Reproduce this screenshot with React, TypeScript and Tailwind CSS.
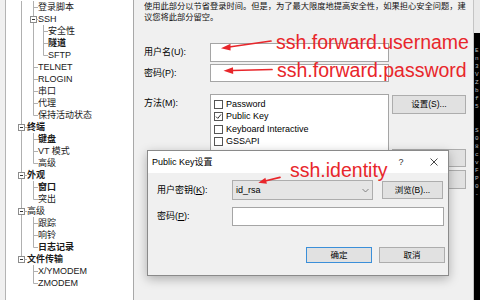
import React from 'react';

type Row = {
  t: string;
  lvl: 0 | 1 | 2;
  box?: boolean;
  bold?: boolean;
  last?: boolean;
  root: 'full' | 'half' | 'none';
};

const rows: Row[] = [
  { t: '登录脚本', lvl: 1, root: 'full' },
  { t: 'SSH', lvl: 1, box: true, root: 'full' },
  { t: '安全性', lvl: 2, root: 'full' },
  { t: '隧道', lvl: 2, bold: true, root: 'full' },
  { t: 'SFTP', lvl: 2, last: true, root: 'full' },
  { t: 'TELNET', lvl: 1, root: 'full' },
  { t: 'RLOGIN', lvl: 1, root: 'full' },
  { t: '串口', lvl: 1, root: 'full' },
  { t: '代理', lvl: 1, root: 'full' },
  { t: '保持活动状态', lvl: 1, last: true, root: 'full' },
  { t: '终端', lvl: 0, box: true, bold: true, root: 'full' },
  { t: '键盘', lvl: 1, bold: true, root: 'full' },
  { t: 'VT 模式', lvl: 1, root: 'full' },
  { t: '高级', lvl: 1, last: true, root: 'full' },
  { t: '外观', lvl: 0, box: true, bold: true, root: 'full' },
  { t: '窗口', lvl: 1, bold: true, root: 'full' },
  { t: '突出', lvl: 1, last: true, root: 'full' },
  { t: '高级', lvl: 0, box: true, root: 'full' },
  { t: '跟踪', lvl: 1, root: 'full' },
  { t: '响铃', lvl: 1, root: 'full' },
  { t: '日志记录', lvl: 1, bold: true, last: true, root: 'full' },
  { t: '文件传输', lvl: 0, box: true, bold: true, root: 'half' },
  { t: 'X/YMODEM', lvl: 1, root: 'none' },
  { t: 'ZMODEM', lvl: 1, last: true, root: 'none' },
];

const LC = '#b0b0b0';

function Guides({ r }: { r: Row }) {
  const w = r.lvl === 0 ? 21 : r.lvl === 1 ? 32 : 42;
  const els: React.ReactNode[] = [];
  const cy = 6.5;
  if (r.lvl === 0 && r.box) {
    els.push(<line key="rt" x1={15.5} y1={0} x2={15.5} y2={3.5} stroke={LC} />);
    if (r.root === 'full') els.push(<line key="rb" x1={15.5} y1={9.5} x2={15.5} y2={12} stroke={LC} />);
    els.push(<rect key="bx" x={12.5} y={3.5} width={6} height={6} fill="#fff" stroke="#8c8c8c" />);
    els.push(<line key="bm" x1={14} y1={cy} x2={17} y2={cy} stroke="#333" />);
    els.push(<line key="bh" x1={18.5} y1={cy} x2={21} y2={cy} stroke={LC} />);
  } else if (r.root === 'full') {
    els.push(<line key="r" x1={15.5} y1={0} x2={15.5} y2={12} stroke={LC} />);
  }
  if (r.lvl === 1) {
    if (r.box) {
      els.push(<line key="l1t" x1={27.5} y1={0} x2={27.5} y2={3.5} stroke={LC} />);
      els.push(<line key="l1b" x1={27.5} y1={9.5} x2={27.5} y2={12} stroke={LC} />);
      els.push(<rect key="bx1" x={24.5} y={3.5} width={6} height={6} fill="#fff" stroke="#8c8c8c" />);
      els.push(<line key="bm1" x1={26} y1={cy} x2={29} y2={cy} stroke="#333" />);
      els.push(<line key="bh1" x1={30.5} y1={cy} x2={32} y2={cy} stroke={LC} />);
    } else {
      els.push(<line key="l1" x1={27.5} y1={0} x2={27.5} y2={r.last ? cy : 12} stroke={LC} />);
      els.push(<line key="h1" x1={27.5} y1={cy} x2={32} y2={cy} stroke={LC} />);
    }
  }
  if (r.lvl === 2) {
    els.push(<line key="l1f" x1={27.5} y1={0} x2={27.5} y2={12} stroke={LC} />);
    els.push(<line key="l2" x1={37.5} y1={0} x2={37.5} y2={r.last ? cy : 12} stroke={LC} />);
    els.push(<line key="h2" x1={37.5} y1={cy} x2={42} y2={cy} stroke={LC} />);
  }
  return (
    <svg width={w} height={12} className="shrink-0 block">
      {els}
    </svg>
  );
}

function WinButton({ children, className = '' }: { children?: React.ReactNode; className?: string }) {
  return (
    <div
      className={`flex items-center justify-center bg-[#e1e1e1] border border-[#adadad] text-[8.5px] leading-none text-black ${className}`}
    >
      {children}
    </div>
  );
}

function CheckItem({ label, checked }: { label: string; checked?: boolean }) {
  return (
    <div className="flex items-center h-[12.5px] pl-[3px]">
      <div className="w-[9px] h-[9px] border border-[#555] bg-white flex items-center justify-center shrink-0">
        {checked && (
          <svg width="7" height="7" viewBox="0 0 7 7">
            <path d="M1 3.6 L2.8 5.4 L6 1.4" fill="none" stroke="#333" strokeWidth="1" />
          </svg>
        )}
      </div>
      <span className="ml-[3px] text-[9px] leading-none">{label}</span>
    </div>
  );
}

const term = ['E', 'n', '3', 'V', 'Z', 'b', 'f', '5', '', '', 'S', '0', '8', 'c', 'v', 'F', 'P', '0', '-'];

export default function App() {
  return (
    <div className="relative w-[480px] h-[300px] overflow-hidden bg-[#f0f0f0] flex text-black font-['Liberation_Sans','Noto_Sans_CJK_SC',sans-serif]">
      <div className="w-[6px] shrink-0 bg-[#f0f0f0] border-r border-[#b4b4b4]" />
      <div className="w-[128px] shrink-0 bg-white border-r border-[#a8a8a8] pt-[1px]">
        {rows.map((r, i) => (
          <div key={i} className="flex items-center h-[12px]">
            <Guides r={r} />
            <span
              className={`text-[9px] leading-none whitespace-nowrap text-[#1a1a1a] ${r.bold ? 'font-bold' : ''}`}
            >
              {r.t}
            </span>
          </div>
        ))}
      </div>
      <div className="w-[339px] shrink-0 pl-[10px]">
        <div className="pt-[1px] text-[8.25px] leading-[11px] whitespace-nowrap text-[#111]">
          <div>使用此部分以节省登录时间。但是，为了最大限度地提高安全性，如果担心安全问题，建</div>
          <div>议您将此部分留空。</div>
        </div>
        <div className="mt-[20px] flex items-center h-[19px]">
          <div className="w-[66px] text-[9px] leading-none">用户名(U):</div>
          <div className="w-[179px] h-[19px] bg-white border border-[#a5a5a5]" />
        </div>
        <div className="mt-[2px] flex items-center h-[18px]">
          <div className="w-[66px] text-[9px] leading-none">密码(P):</div>
          <div className="w-[179px] h-[18px] bg-white border border-[#a5a5a5]" />
        </div>
        <div className="mt-[12px] flex items-start">
          <div className="w-[66px] pt-[3px] text-[9px] leading-[12px]">方法(M):</div>
          <div className="w-[179px] h-[92px] bg-white border border-[#a5a5a5] pt-[3px]">
            <CheckItem label="Password" />
            <CheckItem label="Public Key" checked />
            <CheckItem label="Keyboard Interactive" />
            <CheckItem label="GSSAPI" />
          </div>
          <div className="ml-[3px] flex flex-col">
            <WinButton className="mt-[1px] w-[74px] h-[19px]">设置(S)...</WinButton>
            <WinButton className="mt-[35px] w-[74px] h-[18px]">上移(U)</WinButton>
            <WinButton className="mt-[3px] w-[74px] h-[19px]">下移(D)</WinButton>
          </div>
        </div>
      </div>
      <div className="w-[7px] shrink-0 flex flex-col border-l border-[#c4c4c4]">
        <div className="h-[33px] bg-[#e9e9e9]" />
        <div className="flex-1 bg-black overflow-hidden pt-[14px] pl-[1px] text-[6px] leading-[8px] text-[#bdbdbd] font-['Liberation_Mono',monospace]">
          {term.map((s, i) => (
            <div key={i} className="h-[8px]">{s}</div>
          ))}
        </div>
      </div>

      <svg className="absolute left-0 top-0 pointer-events-none" width="480" height="300">
        <line x1="271" y1="41" x2="229" y2="47" stroke="#e8262b" strokeWidth="1.7" strokeLinecap="round" />
        <polygon points="221,48.3 230.5,43.8 230.6,50.6" fill="#e8262b" />
        <line x1="272" y1="69.5" x2="232" y2="70.5" stroke="#e8262b" strokeWidth="1.7" strokeLinecap="round" />
        <polygon points="223.5,70.8 233,67.3 233.2,74" fill="#e8262b" />
      </svg>
      <div className="absolute left-[276px] top-[32px] text-[19.5px] leading-[20px] text-[#e8262b] whitespace-nowrap font-['Liberation_Sans',sans-serif]">
        ssh.forward.username
      </div>
      <div className="absolute left-[277px] top-[60px] text-[19.5px] leading-[20px] text-[#e8262b] whitespace-nowrap font-['Liberation_Sans',sans-serif]">
        ssh.forward.password
      </div>

      <div className="absolute left-[147px] top-[150px] w-[302px] h-[126px] border border-[#8a8a8a] bg-[#f0f0f0] shadow-[0_3px_10px_rgba(0,0,0,0.28)] flex flex-col">
        <div className="h-[22px] bg-white flex items-center pl-[4px] pr-[4px]">
          <span className="text-[9px] leading-none">Public Key设置</span>
          <span className="ml-auto w-[20px] text-center text-[9px] leading-none text-[#333]">?</span>
          <span className="ml-[13px] w-[20px] flex items-center justify-center">
            <svg width="8" height="8" viewBox="0 0 8 8">
              <path d="M0.5 0.5 L7.5 7.5 M7.5 0.5 L0.5 7.5" stroke="#333" strokeWidth="0.9" />
            </svg>
          </span>
        </div>
        <div className="flex-1 pl-[9px] pr-[3px]">
          <div className="mt-[7px] flex items-center">
            <div className="w-[75px] text-[9px] leading-none">
              用户密钥(<span className="underline">K</span>):
            </div>
            <div className="w-[141px] h-[20px] bg-[#e5e5e5] border border-[#adadad] flex items-center pl-[3px] pr-[3px]">
              <span className="text-[9px] leading-none">id_rsa</span>
              <svg className="ml-auto" width="7" height="5" viewBox="0 0 7 5">
                <path d="M0.5 1 L3.5 4 L6.5 1" fill="none" stroke="#777" strokeWidth="0.9" />
              </svg>
            </div>
            <WinButton className="ml-[9px] w-[61px] h-[18px]">浏览(B)...</WinButton>
          </div>
          <div className="mt-[7px] flex items-center">
            <div className="w-[75px] text-[9px] leading-none">
              密码(<span className="underline">P</span>):
            </div>
            <div className="w-[212px] h-[19px] bg-white border border-[#a5a5a5]" />
          </div>
          <div className="mt-[21px] flex justify-end gap-[7px]">
            <div className="w-[66px] h-[16px] bg-[#e1e1e1] border border-[#3b8fd9] flex items-center justify-center text-[8.5px] leading-none">
              确定
            </div>
            <WinButton className="w-[66px] h-[16px]">取消</WinButton>
          </div>
        </div>
      </div>

      <svg className="absolute left-0 top-0 pointer-events-none" width="480" height="300">
        <line x1="280" y1="177.3" x2="265" y2="181" stroke="#e8262b" strokeWidth="1.7" strokeLinecap="round" />
        <polygon points="258.3,182.7 265.4,177.8 266.9,183.8" fill="#e8262b" />
      </svg>
      <div className="absolute left-[290px] top-[160px] text-[19.5px] leading-[20px] text-[#e8262b] whitespace-nowrap font-['Liberation_Sans',sans-serif]">
        ssh.identity
      </div>
    </div>
  );
}
